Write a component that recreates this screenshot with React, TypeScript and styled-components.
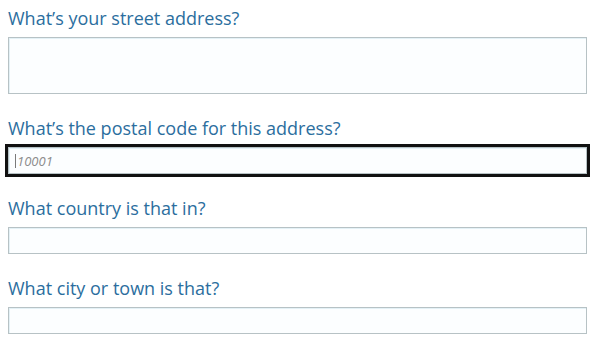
import React from "react";
import styled, { createGlobalStyle } from "styled-components";

const GlobalStyle = createGlobalStyle`
  html, body {
    margin: 0;
    padding: 0;
    background: #ffffff;
  }
  body {
    font-family: "Open Sans", "Noto Sans", sans-serif;
  }
`;

const Form = styled.form`
  display: flex;
  flex-direction: column;
  gap: 24px;
  width: 579px;
  padding: 8px 0 0 8px;
`;

const Field = styled.div`
  display: flex;
  flex-direction: column;
`;

const Label = styled.label`
  font-size: 18px;
  line-height: 20px;
  color: #2b6e9e;
  margin-bottom: 9px;
  white-space: nowrap;
`;

const Box = styled.div<{ $focused?: boolean }>`
  position: relative;
  box-sizing: border-box;
  outline: ${(p) => (p.$focused ? "3px solid #111" : "none")};
`;

const Input = styled.input<{ $tall?: boolean }>`
  display: block;
  box-sizing: border-box;
  width: 100%;
  height: ${(p) => (p.$tall ? "57px" : "27px")};
  margin: 0;
  padding: 0 8px;
  border: 1px solid #b7c2c5;
  border-radius: 0;
  background: #fcfeff;
  box-shadow: inset 1px 1px 0 #e4f1f6;
  font-family: "Open Sans", "Noto Sans", sans-serif;
  font-size: 13px;
  color: #333;
  outline: none;
  caret-color: transparent;

  &::placeholder {
    color: #8c8c8c;
    font-style: italic;
  }
`;

const Caret = styled.span`
  position: absolute;
  left: 7px;
  top: 7px;
  width: 1px;
  height: 14px;
  background: #7a7a7a;
`;

export default function App() {
  return (
    <>
      <GlobalStyle />
      <Form>
        <Field>
          <Label>What’s your street address?</Label>
          <Box>
            <Input $tall type="text" />
          </Box>
        </Field>
        <Field>
          <Label>What’s the postal code for this address?</Label>
          <Box $focused>
            <Input type="text" placeholder="10001" />
            <Caret />
          </Box>
        </Field>
        <Field>
          <Label>What country is that in?</Label>
          <Box>
            <Input type="text" />
          </Box>
        </Field>
        <Field>
          <Label>What city or town is that?</Label>
          <Box>
            <Input type="text" />
          </Box>
        </Field>
      </Form>
    </>
  );
}
